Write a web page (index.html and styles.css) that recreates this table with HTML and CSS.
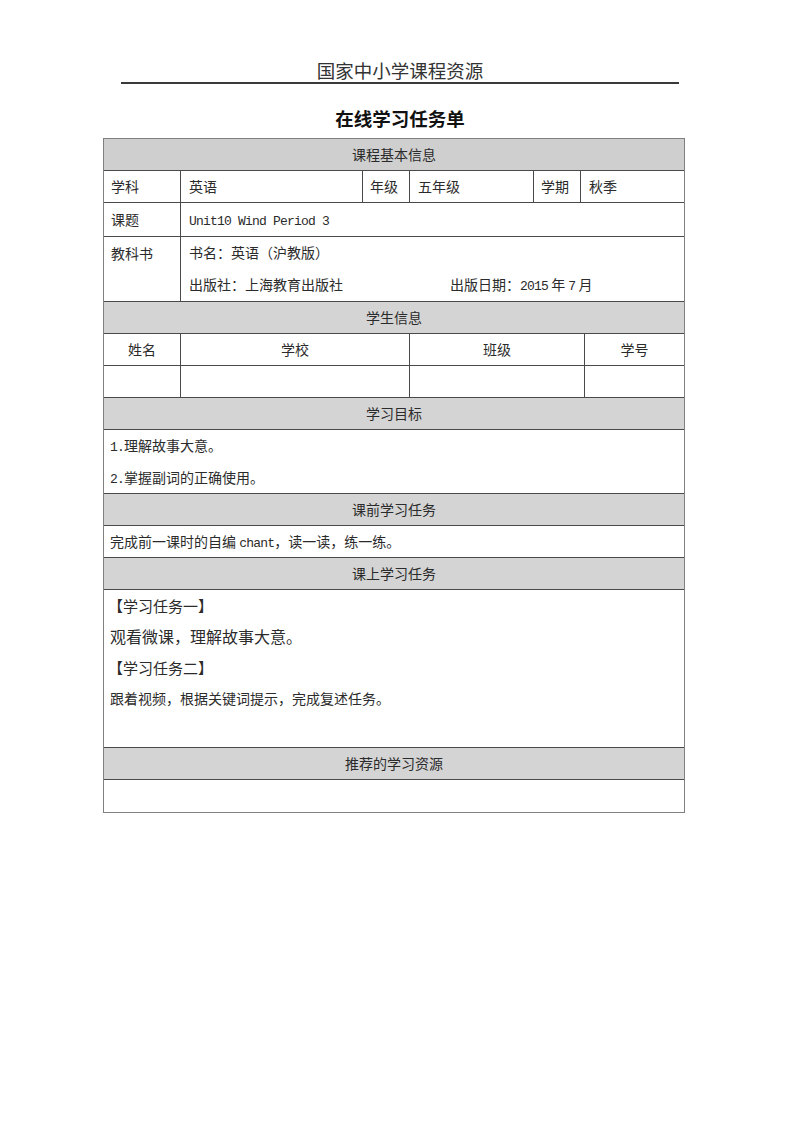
FILE: index.html
```html
<!DOCTYPE html>
<html lang="zh-CN">
<head>
<meta charset="utf-8">
<title>在线学习任务单</title>
<link rel="stylesheet" href="styles.css">
</head>
<body>
<div class="page">
  <header class="site">
    <div class="site-name">国家中小学课程资源</div>
  </header>
  <h1 class="title">在线学习任务单</h1>

  <div class="sheet">
    <div class="row head">课程基本信息</div>

    <div class="row r-info">
      <div class="cell">学科</div>
      <div class="cell">英语</div>
      <div class="cell">年级</div>
      <div class="cell">五年级</div>
      <div class="cell">学期</div>
      <div class="cell">秋季</div>
    </div>

    <div class="row r-topic">
      <div class="cell">课题</div>
      <div class="cell"><span class="lat">Unit10 Wind Period 3</span></div>
    </div>

    <div class="row r-book">
      <div class="cell">教科书</div>
      <div class="cell multi">
        <div class="line">书名：英语（沪教版）</div>
        <div class="line pub"><span class="pub-name">出版社：上海教育出版社</span><span>出版日期：<span class="lat">2015</span> 年 <span class="lat">7</span> 月</span></div>
      </div>
    </div>

    <div class="row head">学生信息</div>

    <div class="row r-student">
      <div class="cell c">姓名</div>
      <div class="cell c">学校</div>
      <div class="cell c">班级</div>
      <div class="cell c">学号</div>
    </div>
    <div class="row r-student empty">
      <div class="cell"></div>
      <div class="cell"></div>
      <div class="cell"></div>
      <div class="cell"></div>
    </div>

    <div class="row head">学习目标</div>
    <div class="row full goals">
      <div class="cell multi">
        <div class="line"><span class="lat">1.</span>理解故事大意。</div>
        <div class="line"><span class="lat">2.</span>掌握副词的正确使用。</div>
      </div>
    </div>

    <div class="row head">课前学习任务</div>
    <div class="row full single">
      <div class="cell">完成前一课时的自编 <span class="lat">chant</span>，读一读，练一练。</div>
    </div>

    <div class="row head">课上学习任务</div>
    <div class="row full tasks">
      <div class="cell multi">
        <div class="line task-label">【学习任务一】</div>
        <div class="line big">观看微课，理解故事大意。</div>
        <div class="line task-label">【学习任务二】</div>
        <div class="line">跟着视频，根据关键词提示，完成复述任务。</div>
      </div>
    </div>

    <div class="row head">推荐的学习资源</div>
    <div class="row full empty-last">
      <div class="cell"></div>
    </div>
  </div>
</div>
</body>
</html>
```

FILE: styles.css
```css
* { box-sizing: border-box; }

body {
  margin: 0;
  background: #ffffff;
  color: #2b2b2b;
  font-family: "Noto Sans CJK SC", "Noto Sans", sans-serif;
  font-size: 14px;
}

.page {
  width: 800px;
  padding-top: 57px;
}

.site {
  margin: 0 121px 0 121px;
  border-bottom: 2px solid #3a3a3a;
  text-align: center;
  height: 27px;
}

.site-name {
  font-size: 18.5px;
  line-height: 27px;
  color: #333;
}

.title {
  margin: 19px 0 0 0;
  text-align: center;
  font-size: 18.5px;
  font-weight: bold;
  line-height: 30px;
  color: #111;
  height: 30px;
}

.sheet {
  width: 582px;
  margin: 5px 0 0 103px;
  border: 1px solid #808080;
}

.row {
  display: grid;
  border-top: 1px solid #4a4a4a;
  overflow: hidden;
}
.row:first-child { border-top: none; }

.head {
  display: block;
  height: 32px;
  line-height: 31px;
  background: #d4d4d4;
  text-align: center;
  color: #2b2b2b;
}
.row.head:first-child { height: 31px; background: #cfcfcf; }

.cell {
  padding: 0 0 0 7px;
  line-height: 31px;
  white-space: nowrap;
}
.cell + .cell { border-left: 1px solid #4a4a4a; }
.cell.c { text-align: center; padding: 0; }

.r-info { grid-template-columns: 76px 182px 47px 124px 47px 1fr; height: 32px; }
.r-info .cell:nth-child(even) { padding-left: 8px; }

.r-topic { grid-template-columns: 76px 1fr; height: 34px; }
.r-topic .cell { line-height: 33px; }
.r-topic .cell + .cell { padding-left: 8px; }

.r-book { grid-template-columns: 76px 1fr; height: 65px; }
.r-book .cell { line-height: 32px; }
.r-book .cell + .cell { padding-left: 8px; }

.r-student { grid-template-columns: 76px 229px 175px 1fr; height: 32px; }

.full { grid-template-columns: 1fr; }
.full .cell { padding-left: 6px; }

.goals { height: 64px; }
.single { height: 32px; }

.multi .line { line-height: 31.5px; height: 31.5px; }

.pub { display: flex; }
.pub-name { width: 261px; }

.lat {
  font-family: "Liberation Mono", "DejaVu Sans Mono", monospace;
  font-size: 13px;
  letter-spacing: -0.8px;
  line-height: 1;
}

.tasks { height: 158px; }
.tasks .line { line-height: 31px; height: 31px; }
.task-label { font-size: 15px; margin-left: -2px; }
.big { font-size: 16px; }

.empty-last { height: 33px; }
```
